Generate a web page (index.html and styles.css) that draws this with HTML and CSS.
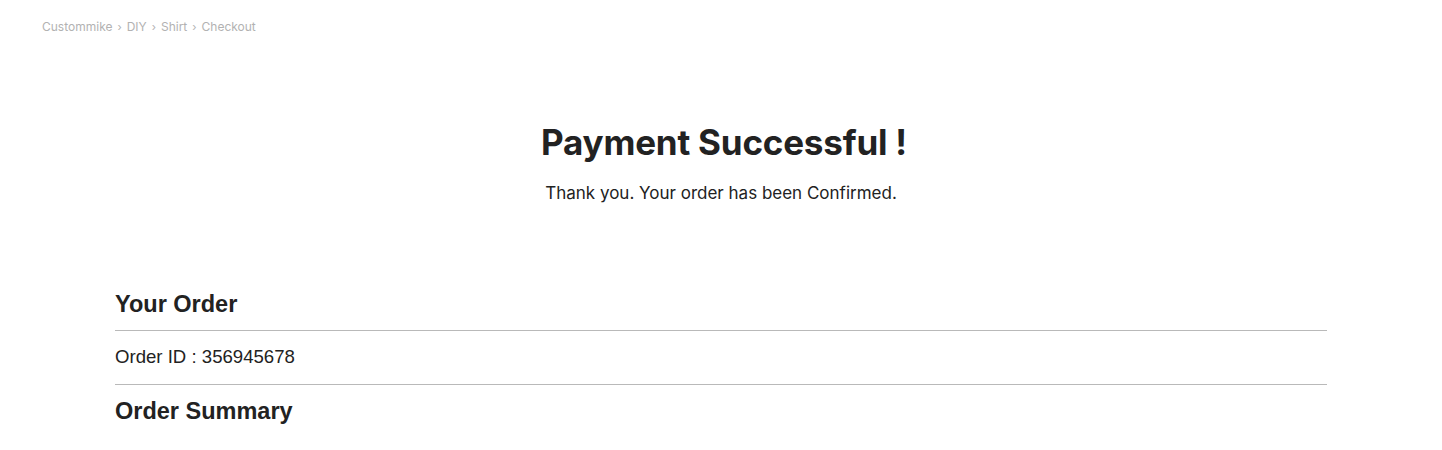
FILE: index.html
```html
<!DOCTYPE html>
<html lang="en">
<head>
<meta charset="utf-8">
<title>Payment Successful</title>
<link rel="stylesheet" href="styles.css">
</head>
<body>
<nav class="crumbs">
  <span>Custommike</span><span class="sep">›</span><span>DIY</span><span class="sep">›</span><span>Shirt</span><span class="sep">›</span><span>Checkout</span>
</nav>
<header class="hero">
  <h1 class="title">Payment Successful !</h1>
  <p class="subtitle">Thank you. Your order has been Confirmed.</p>
</header>
<main class="order">
  <h2 class="section-title">Your Order</h2>
  <div class="order-id">Order ID : 356945678</div>
  <h2 class="section-title summary">Order Summary</h2>
</main>
</body>
</html>
```

FILE: styles.css
```css
* { box-sizing: border-box; }
html, body { margin: 0; padding: 0; background: #fff; }
body {
  font-family: Inter, "Liberation Sans", sans-serif;
  color: #222;
}
.crumbs {
  padding: 19px 0 0 42px;
  font-size: 12px;
  line-height: 16px;
  color: #b2b2b2;
  display: flex;
  gap: 5px;
}
.crumbs .sep { font-size: 11px; }
.hero {
  display: flex;
  flex-direction: column;
  align-items: center;
  padding-top: 87px;
}
.title {
  margin: 0 0 0 6px;
  font-size: 35px;
  line-height: 40px;
  font-weight: 700;
  letter-spacing: -0.2px;
  color: #222;
}
.subtitle {
  margin: 21px 0 0;
  font-size: 17px;
  line-height: 20px;
  color: #222;
}
.order {
  width: 1212px;
  margin: 87px auto 0;
}
.section-title {
  margin: 0;
  font-family: "Liberation Sans", Arial, sans-serif;
  font-size: 23.5px;
  line-height: 28px;
  font-weight: 700;
  color: #222;
  padding-bottom: 12px;
  border-bottom: 1px solid #b9b9b9;
}
.section-title.summary {
  border-bottom: none;
  padding-top: 12px;
}
.order-id {
  font-family: "Liberation Sans", Arial, sans-serif;
  font-size: 18.6px;
  line-height: 20px;
  padding: 16px 0 17px;
  border-bottom: 1px solid #b9b9b9;
}
```
